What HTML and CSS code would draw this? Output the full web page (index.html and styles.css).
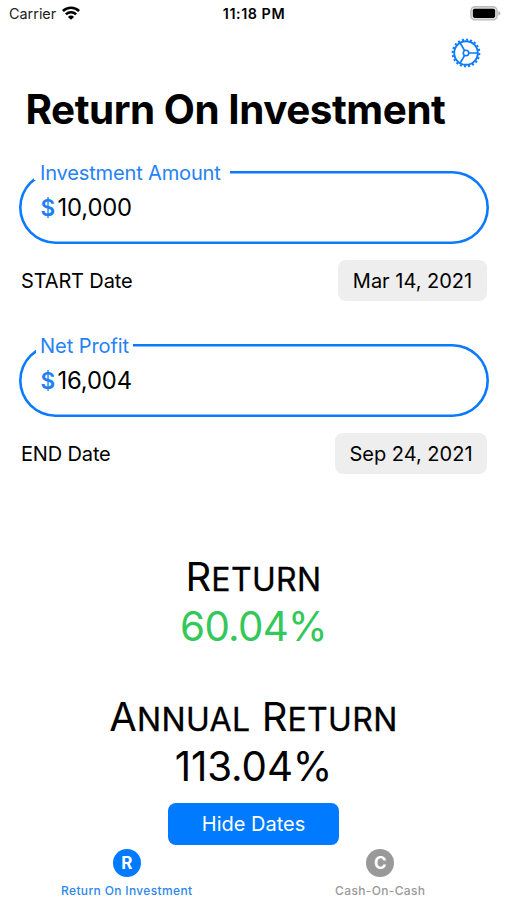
FILE: index.html
```html
<!DOCTYPE html>
<html lang="en">
<head>
<meta charset="utf-8">
<title>Return On Investment</title>
<link rel="stylesheet" href="styles.css">
</head>
<body>
<div class="app">
  <header class="status">
    <div class="carrier"><span>Carrier</span>
      <svg class="wifi" viewBox="0 0 18 14" width="18" height="14"><g fill="none" stroke="#000" stroke-width="2.6"><path d="M.9 5A11.6 11.6 0 0 1 17.1 5"/><path d="M3.9 8.4A7.3 7.3 0 0 1 14.1 8.4"/></g><path d="M9 13.8L5.9 10.9A4.4 4.4 0 0 1 12.1 10.9Z"/></svg>
    </div>
    <div class="clock">11:18 PM</div>
    <svg class="battery" viewBox="0 0 31 15" width="31" height="15"><rect x=".9" y=".7" width="26.2" height="13.2" rx="4" fill="#ddd" stroke="#bcbcbc" stroke-width="1.4"/><rect x="2.9" y="2.7" width="22.2" height="9.2" rx="1.8"/><path d="M28.4 5v4.6q1.8-.7 1.8-2.3T28.4 5Z" fill="#aaa"/></svg>
  </header>
  <div class="toolbar">
    <svg class="gear" viewBox="-15 -15 30 30" width="30" height="30" fill="none" stroke="#0a7aff"><circle r="11.8" stroke-width="1.9"/><circle r="13.4" stroke-width="1.9" pathLength="200" stroke-dasharray="5 5"/><circle r="2.7" stroke-width="1.6"/><path d="M2.8 0H11.5M-1.4 -2.4L-5.8 -10M-1.4 2.4L-5.8 10" stroke-width="1.7"/></svg>
  </div>
  <h1 class="title">Return On Investment</h1>
  <main>
    <section class="entry">
      <div class="field"><span class="label label-amount">Investment Amount</span><span class="sign">$</span><span class="value">10,000</span></div>
      <div class="row"><span class="name">START Date</span><span class="date">Mar 14, 2021</span></div>
    </section>
    <section class="entry">
      <div class="field"><span class="label label-profit">Net Profit</span><span class="sign">$</span><span class="value">16,004</span></div>
      <div class="row"><span class="name">END Date</span><span class="date date-end">Sep 24, 2021</span></div>
    </section>
    <section class="result">
      <h2>R<span>ETURN</span></h2>
      <p class="gain">60.04%</p>
    </section>
    <section class="result annual">
      <h2>A<span>NNUAL</span> R<span>ETURN</span></h2>
      <p>113.04%</p>
    </section>
    <button class="hide">Hide Dates</button>
  </main>
  <nav class="tabs">
    <div class="tab active"><span class="badge">R</span><span class="caption">Return On Investment</span></div>
    <div class="tab"><span class="badge">C</span><span class="caption">Cash-On-Cash</span></div>
  </nav>
</div>
</body>
</html>
```
FILE: styles.css
```css
* { box-sizing: border-box; margin: 0; padding: 0; }
body { background: #fff; color: #000; font-family: Inter, "Liberation Sans", sans-serif; }
.app { width: 507px; height: 900px; display: flex; flex-direction: column; overflow: hidden; white-space: nowrap; }
.app > * { flex-shrink: 0; }
.status { height: 27px; display: grid; grid-template-columns: 1fr auto 1fr; padding: 0 6px 0 9px; font-size: 14.4px; line-height: 27px; }
.carrier { display: flex; gap: 6px; color: #222; }
.wifi { margin-top: 6px; }
.clock { font-weight: 600; font-size: 14.3px; letter-spacing: .55px; margin-right: 2px; }
.battery { justify-self: end; margin-top: 6px; }
.toolbar { height: 51px; padding: 10.5px 26px 0 0; display: flex; justify-content: flex-end; }
.title { height: 92.7px; padding: 1px 0 0 25.5px; font-size: 40.4px; line-height: 61px; font-weight: 700; letter-spacing: -.45px; }
main { display: flex; flex-direction: column; align-items: center; }
.entry { width: 470px; height: 173px; }
.field { position: relative; height: 73px; border-radius: 36.5px; box-shadow: inset 0 0 0 2.6px #0a7aff; display: flex; padding-left: 22px; line-height: 74px; }
.label { position: absolute; top: -9.5px; height: 19px; background: #fff; line-height: 25px; font-size: 20.1px; letter-spacing: -.2px; color: #2582f5; }
.label-amount { left: 15px; width: 196px; padding-left: 6.5px; }
.label-profit { left: 17px; width: 97px; padding-left: 4.5px; letter-spacing: -.1px; }
.sign { width: 17px; color: #1f80f6; font-size: 22.5px; font-weight: 600; }
.value { font-size: 23.8px; letter-spacing: -.15px; }
.row { display: flex; justify-content: space-between; align-items: center; padding: 16px 1.5px 0 2.5px; }
.name { padding-top: 2px; font-size: 20px; letter-spacing: -.15px; }
.date { height: 41px; width: 149px; text-align: center; border-radius: 8px; background: #eee; font-size: 20px; line-height: 42px; }
.date-end { width: 152px; }
.result { padding-top: 35px; text-align: center; }
.result h2 { font-size: 40px; font-weight: 400; line-height: 50px; letter-spacing: .1px; }
.result h2 span { font-size: 32px; letter-spacing: .35px; -webkit-text-stroke: .3px #000; }
.result p { margin-top: -2.7px; font-size: 40.3px; line-height: 50px; letter-spacing: -.7px; }
.gain { color: #34c759; }
.annual { padding-top: 40px; }
.annual p { letter-spacing: -.1px; }
.hide { width: 171px; height: 42px; margin-top: 11px; border: 0; border-radius: 8px; background: #007aff; color: #fff; font: 400 20px/42px Inter, "Liberation Sans", sans-serif; }
.tabs { display: grid; grid-template-columns: 1fr 1fr; padding-top: 4px; }
.tab { display: flex; flex-direction: column; align-items: center; color: #999; }
.badge { width: 28px; height: 28px; border-radius: 50%; background: #999; color: #fff; font-size: 17px; line-height: 28px; font-weight: 700; text-align: center; }
.active { color: #2d88ed; }
.active .badge { background: #007aff; }
.caption { margin-top: 6px; font-size: 12px; line-height: 16px; font-weight: 500; letter-spacing: .35px; }
```
